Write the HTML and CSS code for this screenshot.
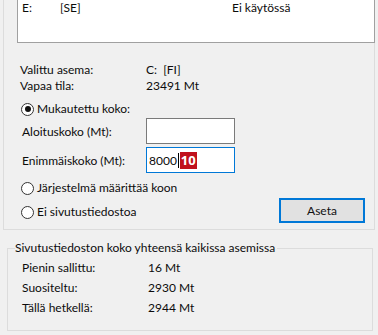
FILE: index.html
```html
<!DOCTYPE html>
<html lang="fi">
<head>
  <meta charset="UTF-8" />
  <title>Virtuaalimuisti</title>
  <link rel="stylesheet" href="styles.css">
</head>
<body>

<div class="panel">
  <div class="drive-list">
    <div class="drive-row">
      <span class="col-drive">E:</span>
      <span class="col-label">[SE]</span>
      <span class="col-size">Ei käytössä</span>
    </div>
  </div>

  <div class="info">
    <div class="row"><span class="label">Valittu asema:</span><span>C:&nbsp;&nbsp;[FI]</span></div>
    <div class="row"><span class="label">Vapaa tila:</span><span>23491 Mt</span></div>
  </div>

  <div class="radio radio-custom"><span class="dot checked"></span>Mukautettu koko:</div>

  <div class="field field-first">
    <span class="label">Aloituskoko (Mt):</span>
    <div class="textbox"></div>
  </div>
  <div class="field field-second">
    <span class="label">Enimmäiskoko (Mt):</span>
    <div class="textbox focused">8000<span class="caret"></span><span class="step">10</span></div>
  </div>

  <div class="radio radio-system"><span class="dot"></span>Järjestelmä määrittää koon</div>

  <div class="last-row">
    <div class="radio"><span class="dot"></span>Ei sivutustiedostoa</div>
    <button class="btn-set">Aseta</button>
  </div>
</div>

<fieldset class="totals">
  <legend>Sivutustiedoston koko yhteensä kaikissa asemissa</legend>
  <div class="row"><span class="label">Pienin sallittu:</span><span>16 Mt</span></div>
  <div class="row"><span class="label">Suositeltu:</span><span>2930 Mt</span></div>
  <div class="row"><span class="label">Tällä hetkellä:</span><span>2944 Mt</span></div>
</fieldset>

</body>
</html>
```

FILE: styles.css
```css
body {
  margin: 0;
  font-family: Lato, "Noto Sans", sans-serif;
  font-size: 12px;
  background-color: #f0f0f0;
  color: #0c0c0c;
  overflow: hidden;
}

.panel {
  margin: 0 3px;
  padding: 0 0 6px 16px;
  border: 1px solid #dcdcdc;
  border-top: none;
}

.drive-list {
  height: 42px;
  margin: 0 -1px 0 -3px;
  background: white;
  border: 1px solid #a0a0a0;
  border-top: none;
  overflow: hidden;
}

.drive-row {
  display: flex;
  line-height: 15px;
  padding-left: 4px;
}

.col-drive {
  width: 38px;
}

.col-label {
  width: 172px;
}

.info {
  margin-top: 19px;
}

.row {
  display: flex;
  line-height: 16px;
}

.label {
  width: 126px;
  flex-shrink: 0;
}

.radio {
  display: flex;
  align-items: center;
  height: 16px;
  line-height: 16px;
}

.dot {
  width: 11px;
  height: 11px;
  border: 1px solid #333;
  border-radius: 50%;
  background: white;
  margin: 0 3px 0 1px;
  position: relative;
}

.dot.checked::after {
  content: "";
  position: absolute;
  left: 2.5px;
  top: 2.5px;
  width: 6px;
  height: 6px;
  border-radius: 50%;
  background: #111;
}

.radio-custom {
  margin-top: 7px;
}

.field {
  display: flex;
  align-items: center;
}

.field .label {
  padding-left: 2px;
  width: 124px;
}

.field-first {
  margin-top: 1px;
}

.field-second {
  margin-top: 3px;
}

.textbox {
  width: 85px;
  height: 24px;
  background: white;
  border: 1px solid #7a7a7a;
  display: flex;
  align-items: center;
  padding-left: 2px;
}

.textbox.focused {
  border-color: #0078d7;
}

.caret {
  width: 1px;
  height: 15px;
  background: #000;
  margin: 0 1px 0 1px;
}

.step {
  background: #c0101c;
  color: white;
  font-family: "Noto Sans", sans-serif;
  font-weight: bold;
  font-size: 13px;
  line-height: 17px;
  padding: 0 1px;
}

.radio-system {
  margin-top: 7px;
}

.last-row {
  display: flex;
  justify-content: space-between;
  align-items: center;
  margin-top: 2px;
  padding-right: 9px;
}

.last-row .radio {
  margin-top: 3px;
}

.btn-set {
  width: 86px;
  height: 25px;
  font-family: inherit;
  font-size: 12px;
  color: #111;
  background: #e1e1e1;
  border: 1px solid #0078d7;
  box-shadow: inset 0 0 0 1px #0078d7;
  padding: 0;
}

.totals {
  margin: 10px 5px 0 7px;
  padding: 2px 0 12px 14px;
  border: 1px solid #dcdcdc;
  min-width: 0;
}

.totals legend {
  margin-left: -7px;
  padding: 0 2px 0 0;
  line-height: 16px;
}

.totals .row {
  line-height: 20px;
}
```
